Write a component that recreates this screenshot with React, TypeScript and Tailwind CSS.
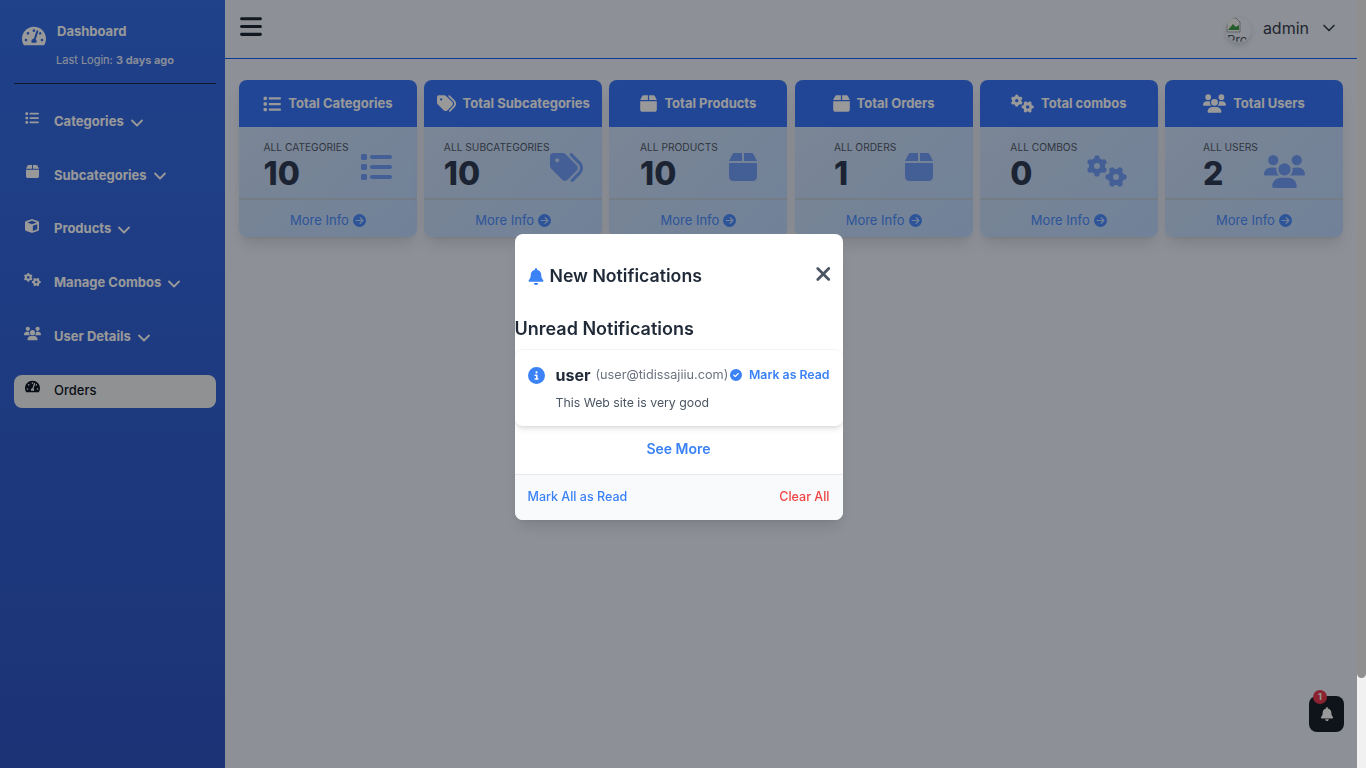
import { ChevronDown } from 'lucide-react'
import { FaTachometerAlt } from 'react-icons/fa'
import {
    FaBars,
    FaBell,
    FaBox,
    FaCircleArrowRight,
    FaCircleCheck,
    FaCircleInfo,
    FaCube,
    FaGears,
    FaList,
    FaTags,
    FaUsers,
    FaXmark,
} from 'react-icons/fa6'
import type { IconType } from 'react-icons'

const navItems: { label: string; icon: IconType; iconSize: string }[] = [
    { label: 'Categories', icon: FaList, iconSize: 'w-[14px] h-[14px]' },
    { label: 'Subcategories', icon: FaBox, iconSize: 'w-[13px] h-[15px]' },
    { label: 'Products', icon: FaCube, iconSize: 'w-[14px] h-[14px]' },
    { label: 'Manage Combos', icon: FaGears, iconSize: 'w-[17px] h-[17px]' },
    { label: 'User Details', icon: FaUsers, iconSize: 'w-[17px] h-[17px]' },
]

const cards: {
    title: string
    label: string
    value: string
    icon: IconType
    headIcon: string
    bodyIcon: string
    gap: string
}[] = [
    { title: 'Total Categories', label: 'ALL CATEGORIES', value: '10', icon: FaList, headIcon: 'w-[18px] h-[18px]', bodyIcon: 'w-[32px] h-[32px]', gap: 'gap-3' },
    { title: 'Total Subcategories', label: 'ALL SUBCATEGORIES', value: '10', icon: FaTags, headIcon: 'w-[19px] h-[19px]', bodyIcon: 'w-[33px] h-[33px]', gap: 'gap-0' },
    { title: 'Total Products', label: 'ALL PRODUCTS', value: '10', icon: FaBox, headIcon: 'w-[17px] h-[19px]', bodyIcon: 'w-[28px] h-[32px]', gap: 'gap-[11px]' },
    { title: 'Total Orders', label: 'ALL ORDERS', value: '1', icon: FaBox, headIcon: 'w-[17px] h-[19px]', bodyIcon: 'w-[28px] h-[32px]', gap: 'gap-[9px]' },
    { title: 'Total combos', label: 'ALL COMBOS', value: '0', icon: FaGears, headIcon: 'w-[23px] h-[23px]', bodyIcon: 'w-[40px] h-[40px]', gap: 'gap-[10px]' },
    { title: 'Total Users', label: 'ALL USERS', value: '2', icon: FaUsers, headIcon: 'w-[23px] h-[23px]', bodyIcon: 'w-[41px] h-[41px]', gap: 'gap-[6px]' },
]

function Sidebar() {
    return (
        <aside className="flex h-full w-[225px] shrink-0 flex-col bg-gradient-to-b from-[#356ee8] to-[#2f56c4] pl-[14px] pr-[9px] text-white">
            <div className="flex h-[84px] flex-col border-b border-[#1d2b4f]">
                <div className="flex items-start gap-[11px] pl-2 pt-[24px]">
                    <FaTachometerAlt className="h-[24px] w-[24px]" />
                    <span className="text-[13px] font-bold leading-[14px]">Dashboard</span>
                </div>
                <p className="pl-[42px] pt-[5px] text-[11px] leading-[14px] text-white/90">
                    Last Login: <span className="font-semibold">3 days ago</span>
                </p>
            </div>
            <nav className="flex flex-col gap-[20.8px] pt-[22px]">
                {navItems.map((item) => (
                    <div key={item.label} className="flex h-[33px] items-center">
                        <span className="flex w-[40px] justify-center pb-[9px] pr-[4px]">
                            <item.icon className={item.iconSize} />
                        </span>
                        <span className="pb-[2px] text-[13px] font-bold">{item.label}</span>
                        <ChevronDown className="ml-[3px] h-[20px] w-[20px]" strokeWidth={2.2} />
                    </div>
                ))}
                <div className="flex h-[33px] items-center rounded-lg bg-[#f0f2f6] text-[#111827]">
                    <span className="flex w-[40px] justify-center pb-[9px] pr-[4px]">
                        <FaTachometerAlt className="h-[15px] w-[15px]" />
                    </span>
                    <span className="pb-[2px] text-[13px] font-medium">Orders</span>
                </div>
            </nav>
        </aside>
    )
}

function Topbar() {
    return (
        <header className="flex h-[59px] items-center justify-between border-b border-blue-600 pl-[15px] pr-[18px]">
            <FaBars className="mb-[6px] h-[25px] w-[22px] text-[#1f2937]" />
            <div className="flex items-center">
                <div className="h-[27px] w-[27px] overflow-hidden rounded-full border border-gray-200 shadow-md">
                    <svg viewBox="0 0 16 16" className="h-[16px] w-[16px]">
                        <path d="M1 1h9l4 4v10H1z" fill="#f3f4f6" stroke="#9ca3af" />
                        <path d="M2 13l5-6 3 3 3-2v5z" fill="#3f9b4b" />
                    </svg>
                    <span className="block pl-px text-[13px] leading-[14px] text-gray-600">Pro</span>
                </div>
                <span className="ml-[11px] pb-[2px] text-[16px] text-[#374151]">admin</span>
                <ChevronDown className="ml-[10px] mb-[2px] h-[20px] w-[20px] text-[#374151]" />
            </div>
        </header>
    )
}

function StatCard({ card }: { card: (typeof cards)[number] }) {
    return (
        <div className="h-[157px] overflow-hidden rounded-lg bg-gradient-to-br from-[#cfe0f8] to-[#bcd8ff] shadow-lg">
            <div className="flex h-[47px] items-center justify-center gap-[7px] bg-[#3a76fa] text-white">
                <card.icon className={card.headIcon} />
                <span className="text-[13px] font-bold">{card.title}</span>
            </div>
            <div className={`flex h-[73px] items-start justify-center border-b-2 border-[#c2cfe0] pt-[13px] ${card.gap}`}>
                <div className="whitespace-nowrap">
                    <p className="text-[10.2px] leading-[14px] text-[#525a68]">{card.label}</p>
                    <p className="pt-px text-[32px] font-extrabold leading-[38px] text-[#2f3d55]">{card.value}</p>
                </div>
                <card.icon className={`mt-[11px] shrink-0 text-[#3a76fa]/60 ${card.bodyIcon}`} />
            </div>
            <div className="flex h-[37px] items-center justify-center gap-[4px] pt-[4px] text-[13px] text-[#4b8dff]">
                More Info <FaCircleArrowRight className="mb-px h-[13px] w-[13px]" />
            </div>
        </div>
    )
}

function NotificationsModal() {
    return (
        <div className="fixed inset-y-0 left-0 right-[9px] flex items-start justify-center bg-black/40 pt-[234px]">
            <div className="w-[328px] overflow-hidden rounded-lg bg-white shadow-lg">
                <div className="flex h-[83px] items-center justify-between px-[13px]">
                    <div className="flex items-center gap-[6px] pt-[2px]">
                        <FaBell className="h-[17px] w-[16px] text-[#3b82f6]" />
                        <h2 className="text-[17.7px] font-semibold text-[#1f2937]">New Notifications</h2>
                    </div>
                    <FaXmark className="-mr-[2px] mb-[4px] h-[22px] w-[16.5px] text-[#4b5563]" />
                </div>
                <h3 className="h-[32px] text-[18px] font-semibold leading-[24px] text-[#1f2937]">Unread Notifications</h3>
                <div className="h-[77px] rounded-lg border-t border-gray-100 bg-white px-[13px] shadow-md">
                    <div className="flex items-center pt-[15px]">
                        <FaCircleInfo className="h-[17px] w-[17px] shrink-0 text-[#3b82f6]" />
                        <span className="ml-[11px] text-[16px] font-bold leading-[20px] text-[#1f2937]">user</span>
                        <span className="ml-[5px] whitespace-nowrap text-[12.7px] text-[#6b7280]">(user@tidissajiiu.com)</span>
                        <FaCircleCheck className="ml-auto h-[12px] w-[12px] shrink-0 text-[#3b82f6]" />
                        <span className="ml-[7px] whitespace-nowrap text-[12.3px] font-semibold text-[#3b82f6]">Mark as Read</span>
                    </div>
                    <p className="pl-[28px] pt-[9px] text-[12.3px] text-[#4b5563]">This Web site is very good</p>
                </div>
                <div className="flex h-[48px] items-center justify-center pb-[3px] text-[14px] font-semibold text-[#3b82f6]">See More</div>
                <div className="flex h-[46px] items-center justify-between border-t border-gray-200 bg-gray-50 px-[13px] text-[12.5px] font-medium">
                    <span className="text-[#3b82f6]">Mark All as Read</span>
                    <span className="text-[#ef4444]">Clear All</span>
                </div>
            </div>
        </div>
    )
}

export default function App() {
    return (
        <div className="flex h-screen overflow-hidden bg-[#ebf0fa] font-[family-name:Inter,sans-serif]">
            <Sidebar />
            <main className="relative min-w-0 flex-1">
                <Topbar />
                <div className="grid grid-cols-6 gap-[7.2px] px-[14px] pt-[21px]">
                    {cards.map((card) => (
                        <StatCard key={card.title} card={card} />
                    ))}
                </div>
                <button className="absolute bottom-[36px] right-[13px] flex h-[36px] w-[35px] items-center justify-center rounded-lg bg-[#19202c] text-white">
                    <FaBell className="h-[14px] w-[14px]" />
                    <span className="absolute left-[4px] -top-[6px] flex h-[14px] w-[14px] items-center justify-center rounded-full bg-[#e63a50] text-[9px] font-bold">1</span>
                </button>
            </main>
            <NotificationsModal />
            <div className="w-[9px] shrink-0 bg-[#f1f1f1]">
                <div className="h-[678px] rounded-b-full bg-[#8f8f8f]" />
            </div>
        </div>
    )
}
